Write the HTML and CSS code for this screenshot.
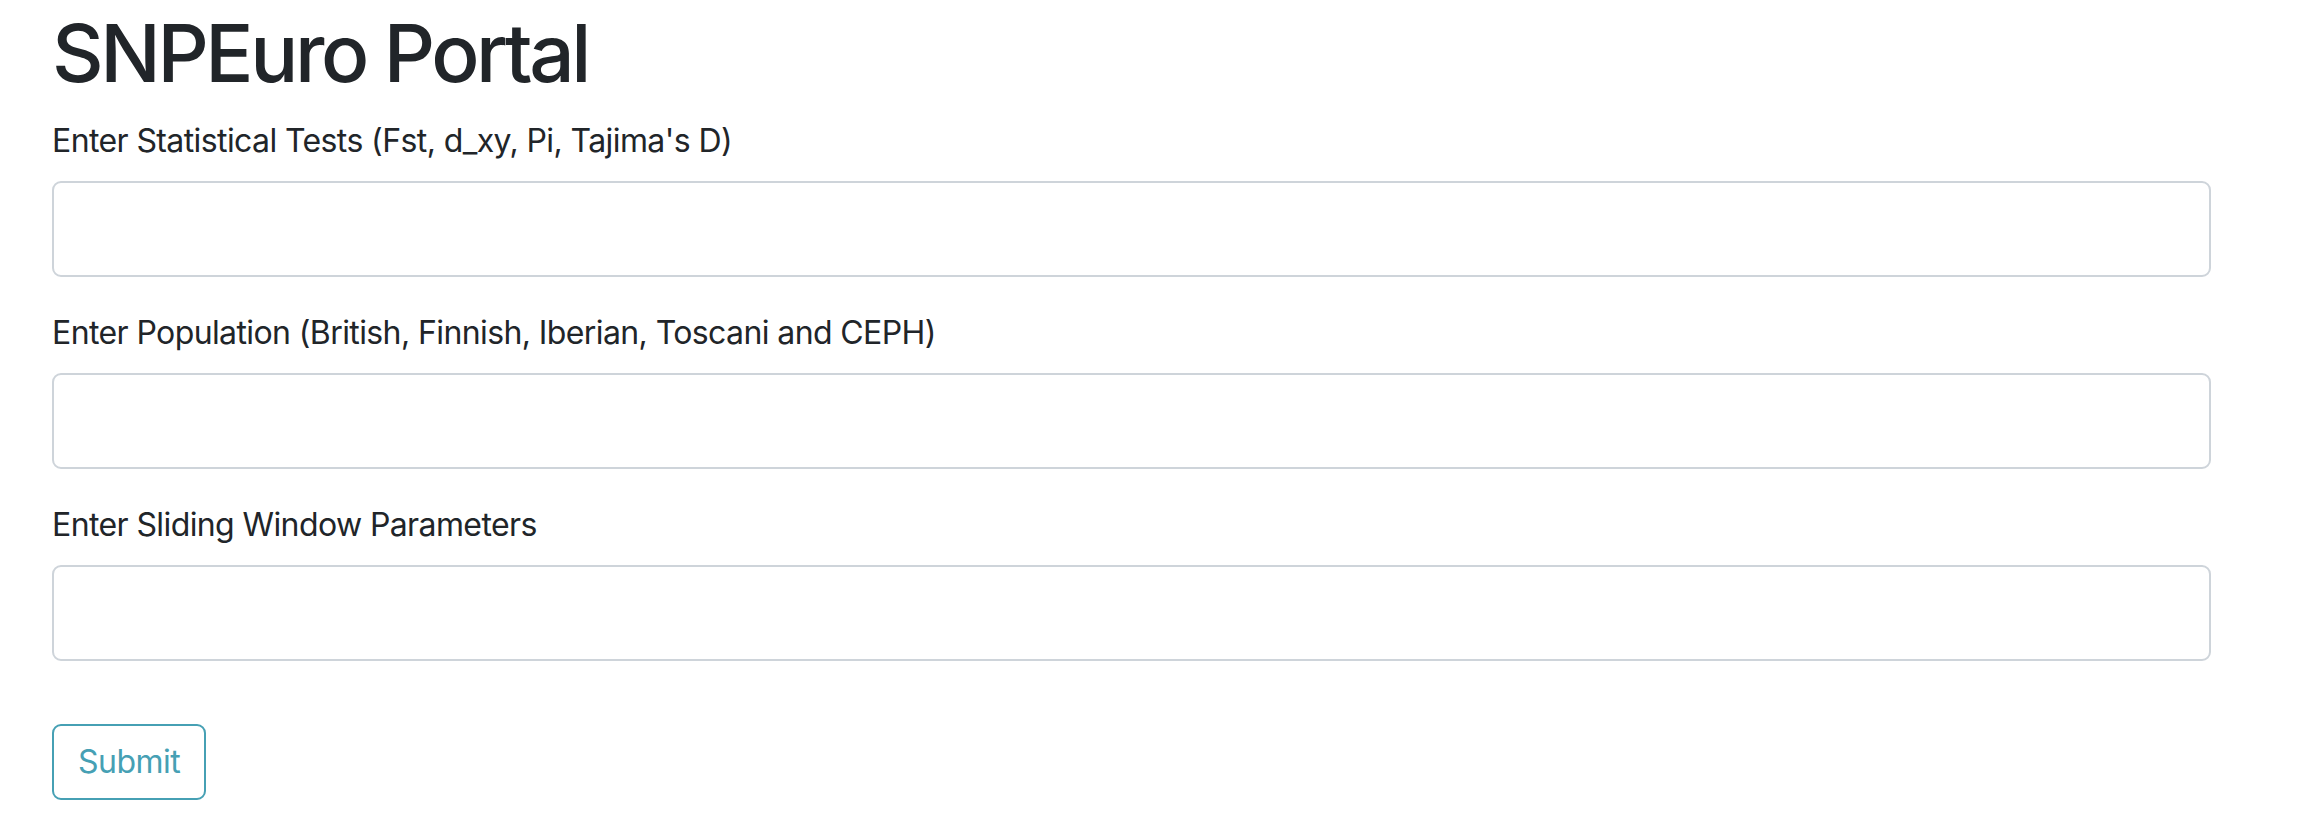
FILE: index.html
```html
<!DOCTYPE html>
<html lang="en">
<head>
<meta charset="utf-8">
<title>SNPEuro Portal</title>
<link rel="stylesheet" href="styles.css">
</head>
<body>
<main class="page">
  <h1 class="title">SNPEuro Portal</h1>
  <form class="form">
    <div class="form-group">
      <label class="label" for="tests">Enter Statistical Tests (Fst, d_xy, Pi, Tajima's D)</label>
      <input class="input" id="tests" type="text">
    </div>
    <div class="form-group">
      <label class="label" for="pop">Enter Population (British, Finnish, Iberian, Toscani and CEPH)</label>
      <input class="input" id="pop" type="text">
    </div>
    <div class="form-group">
      <label class="label" for="win">Enter Sliding Window Parameters</label>
      <input class="input" id="win" type="text">
    </div>
    <button class="btn" type="submit">Submit</button>
  </form>
</main>
</body>
</html>
```
FILE: styles.css
```css
html, body {
  margin: 0;
  padding: 0;
  background: #ffffff;
}
body {
  font-family: Inter, "Noto Sans", "Liberation Sans", sans-serif;
  color: #212529;
}
.page {
  box-sizing: border-box;
  width: 2211px;
  padding: 5px 0 0 52px;
}
.title {
  margin: 0 0 16px;
  font-size: 80px;
  line-height: 96px;
  font-weight: 500;
  letter-spacing: -3.4px;
}
.form {
  display: flex;
  flex-direction: column;
  align-items: flex-start;
}
.form-group {
  width: 100%;
  margin-bottom: 32px;
}
.label {
  display: block;
  font-size: 32px;
  line-height: 48px;
  margin-bottom: 16px;
  letter-spacing: -0.6px;
}
.input {
  display: block;
  box-sizing: border-box;
  width: 100%;
  height: 96px;
  margin: 0;
  border: 2px solid #ced4da;
  border-radius: 9px;
  background: #ffffff;
  font: inherit;
  font-size: 32px;
}
.btn {
  margin-top: 31px;
  box-sizing: border-box;
  height: 76px;
  padding: 12px 24px;
  border: 2px solid #46a0b4;
  border-radius: 9px;
  background: #ffffff;
  color: #46a0b4;
  font-family: inherit;
  font-size: 32px;
  line-height: 48px;
  letter-spacing: -0.5px;
}
```
